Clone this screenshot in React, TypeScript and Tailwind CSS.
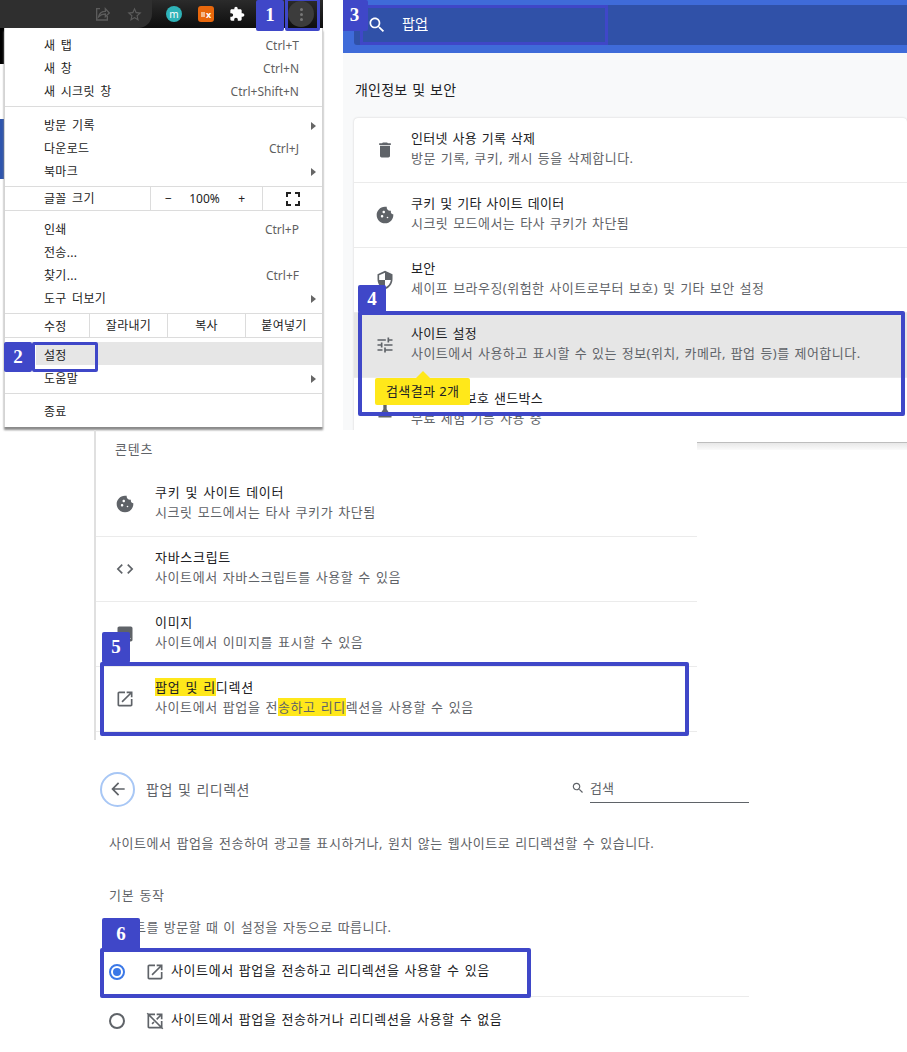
import type { ReactNode } from "react";

const ICONS = {
  trash: "M6 19c0 1.1.9 2 2 2h8c1.1 0 2-.9 2-2V7H6v12zM19 4h-3.5l-1-1h-5l-1 1H5v2h14V4z",
  cookie:
    "M21.95 10.99c-1.79-.03-3.7-1.95-2.68-4.22-2.98 1-5.77-1.59-5.19-4.56C6.95.71 2 6.58 2 12c0 5.52 4.48 10 10 10 5.89 0 10.54-5.08 9.95-11.01zM8.5 15C7.67 15 7 14.33 7 13.5S7.67 12 8.5 12s1.5.67 1.5 1.5S9.33 15 8.5 15zm2-5C9.67 10 9 9.33 9 8.5S9.67 7 10.5 7s1.5.67 1.5 1.5-.67 1.5-1.5 1.5zM15 16c-.55 0-1-.45-1-1s.45-1 1-1 1 .45 1 1-.45 1-1 1z",
  shield:
    "M12 1L3 5v6c0 5.55 3.84 10.74 9 12 5.16-1.26 9-6.45 9-12V5l-9-4zm0 10.99h7c-.53 4.12-3.28 7.79-7 8.94V12H5V6.3l7-3.11v8.8z",
  tune: "M3 17v2h6v-2H3zM3 5v2h10V5H3zm10 16v-2h8v-2h-8v-2h-2v6h2zM7 9v2H3v2h4v2h2V9H7zm14 4v-2H11v2h10zm-6-4h2V7h4V5h-4V3h-2v6z",
  flask: "M5 21c-.8 0-1.3-.9-.8-1.6L10 11V4h4v7l5.8 8.4c.5.7 0 1.6-.8 1.6H5z",
  code: "M9.4 16.6L4.8 12l4.6-4.6L8 6l-6 6 6 6 1.4-1.4zm5.2 0l4.6-4.6-4.6-4.6L16 6l6 6-6 6-1.4-1.4z",
  image:
    "M21 19V5c0-1.1-.9-2-2-2H5c-1.1 0-2 .9-2 2v14c0 1.1.9 2 2 2h14c1.1 0 2-.9 2-2zM8.5 13.5l2.5 3.01L14.5 12l4.5 6H5l3.5-4.5z",
  open: "M19 19H5V5h7V3H5c-1.11 0-2 .9-2 2v14c0 1.1.89 2 2 2h14c1.1 0 2-.9 2-2v-7h-2v7zM14 3v2h3.59l-9.83 9.83 1.41 1.41L19 6.41V10h2V3h-7z",
  blocked:
    "M19 19H5V5h7V3H5c-1.11 0-2 .9-2 2v14c0 1.1.89 2 2 2h14c1.1 0 2-.9 2-2v-7h-2v7zM14 3v2h3.59l-4.3 4.3 1.41 1.41L19 6.41V10h2V3h-7zM3.4 2L2 3.4l18.6 18.6 1.4-1.4L3.4 2zM7.76 14.83l1.41 1.41 2.3-2.3-1.41-1.41-2.3 2.3z",
  search:
    "M15.5 14h-.79l-.28-.27C15.41 12.59 16 11.11 16 9.5 16 5.91 13.09 3 9.5 3S3 5.91 3 9.5 5.91 16 9.5 16c1.61 0 3.09-.59 4.23-1.57l.27.28v.79l5 4.99L20.49 19l-4.99-5zm-6 0C7.01 14 5 11.99 5 9.5S7.01 5 9.5 5 14 7.01 14 9.5 11.99 14 9.5 14z",
  back: "M20 11H7.83l5.59-5.59L12 4l-8 8 8 8 1.41-1.41L7.83 13H20v-2z",
  puzzle:
    "M20.5 11H19V7c0-1.1-.9-2-2-2h-4V3.5C13 2.12 11.88 1 10.5 1S8 2.12 8 3.5V5H4c-1.1 0-1.99.9-1.99 2v3.8H3.5c1.49 0 2.7 1.21 2.7 2.7s-1.21 2.7-2.7 2.7H2V20c0 1.1.9 2 2 2h3.8v-1.5c0-1.49 1.21-2.7 2.7-2.7 1.49 0 2.7 1.21 2.7 2.7V22H17c1.1 0 2-.9 2-2v-4h1.5c1.38 0 2.5-1.12 2.5-2.5S21.88 11 20.5 11z",
  star: "M22 9.24l-7.19-.62L12 2 9.19 8.63 2 9.24l5.46 4.73L5.82 21 12 17.27 18.18 21l-1.63-7.03L22 9.24zM12 15.4l-3.76 2.27 1-4.28-3.32-2.88 4.38-.38L12 6.1l1.71 4.04 4.38.38-3.32 2.88 1 4.28L12 15.4z",
};

function Icon({ name, className }: { name: keyof typeof ICONS; className: string }) {
  return (
    <svg viewBox="0 0 24 24" className={className} fill="currentColor">
      <path d={ICONS[name]} />
    </svg>
  );
}

function Badge({ n, className }: { n: number; className: string }) {
  return (
    <div
      className={`absolute z-20 flex items-center justify-center rounded-[2px] bg-[#3f47c8] font-['Liberation_Serif',serif] text-[19px] font-bold text-white ${className}`}
    >
      {n}
    </div>
  );
}

function MenuRow({ label, hint, arrow }: { label: string; hint?: string; arrow?: boolean }) {
  return (
    <div className="flex h-[23px] items-center pl-[39px] pr-[6px]">
      <span className="tracking-[0.3px] [word-spacing:2px]">{label}</span>
      {hint && <span className="ml-auto pr-[17px] text-[#5f5f5f]">{hint}</span>}
      {arrow && (
        <span className="ml-auto h-0 w-0 border-y-[4px] border-l-[5px] border-y-transparent border-l-[#666]" />
      )}
    </div>
  );
}

function MenuLine() {
  return <div className="h-px bg-[#dcdcdc]" />;
}

function Browser() {
  return (
    <div className="relative w-[343px]">
      <div className="flex h-[28px] w-[323px] items-center bg-gradient-to-b from-[#2b2b2b] to-[#0e0e0e]">
        <div className="flex h-[28px] w-[152px] items-center justify-end gap-[16px] rounded-br-[14px] bg-[#2f2f2f] pr-[9px] text-[#5c5c5c]">
          <svg viewBox="0 0 24 24" className="h-[16px] w-[16px]" fill="none" stroke="currentColor" strokeWidth="2">
            <path d="M9 4H4v17h16v-6M7 16c1-5 5-8 10-8V4l6 6.5L17 16v-4c-4 0-7 1-10 4z" />
          </svg>
          <Icon name="star" className="h-[17px] w-[17px]" />
        </div>
        <div className="ml-[14px] flex h-[16px] w-[16px] items-center justify-center rounded-full bg-[#2fb3b8] text-[10px] leading-none text-white">
          m
        </div>
        <div className="ml-[16px] flex h-[16px] w-[16px] items-center justify-center gap-[1px] rounded-[3px] bg-[#e8670c] text-[9px] font-bold leading-none text-white">
          <span className="h-[5px] w-[4px] bg-[#f4b98c]" />x
        </div>
        <Icon name="puzzle" className="ml-[15px] h-[16px] w-[16px] text-white" />
        <div className="ml-[43px] flex h-[26px] w-[26px] flex-col items-center justify-center gap-[2px] rounded-full bg-[#3c3c3c]">
          <span className="h-[3px] w-[3px] rounded-full bg-[#777]" />
          <span className="h-[3px] w-[3px] rounded-full bg-[#777]" />
          <span className="h-[3px] w-[3px] rounded-full bg-[#777]" />
        </div>
      </div>
      <Badge n={1} className="left-[256px] top-0 h-[31px] w-[28px]" />
      <div className="absolute left-[285px] top-0 z-10 h-[31px] w-[35px] rounded-b-[2px] border-[3px] border-t-[1px] border-[#3f47c8]" />

      <div className="flex">
        <div className="flex w-[4px] flex-col">
          <div className="h-[36px] w-[4px] bg-black" />
          <div className="mt-[55px] h-[60px] w-[4px] bg-[#2f55ad]" />
        </div>
        <div className="h-[399px] w-[319px] border-x border-x-[#d4d4d4] bg-white text-[12px] text-[#222] shadow-[0_3px_2px_#8a8a8a]">
          <div className="pt-[6px]">
            <MenuRow label="새 탭" hint="Ctrl+T" />
            <MenuRow label="새 창" hint="Ctrl+N" />
            <MenuRow label="새 시크릿 창" hint="Ctrl+Shift+N" />
          </div>
          <div className="mt-[3px]">
            <MenuLine />
          </div>
          <div className="pt-[7px]">
            <MenuRow label="방문 기록" arrow />
            <MenuRow label="다운로드" hint="Ctrl+J" />
            <MenuRow label="북마크" arrow />
          </div>
          <div className="mt-[3px]">
            <MenuLine />
          </div>
          <div className="flex h-[23px] items-center">
            <div className="w-[145px] pl-[39px] tracking-[0.3px] [word-spacing:2px]">글꼴 크기</div>
            <div className="flex h-full w-[113px] items-center border-x border-x-[#dcdcdc]">
              <span className="w-[36px] pl-[14px]">−</span>
              <span className="w-[36px] text-center">100%</span>
              <span className="w-[40px] pl-[16px]">+</span>
            </div>
            <div className="flex flex-1 items-center justify-center">
              <svg viewBox="0 0 14 14" className="h-[14px] w-[14px]" fill="none" stroke="#222" strokeWidth="2">
                <path d="M1 5V1h4M9 1h4v4M13 9v4H9M5 13H1V9" />
              </svg>
            </div>
          </div>
          <MenuLine />
          <div className="pt-[7px]">
            <MenuRow label="인쇄" hint="Ctrl+P" />
            <MenuRow label="전송..." />
            <MenuRow label="찾기..." hint="Ctrl+F" />
            <MenuRow label="도구 더보기" arrow />
          </div>
          <div className="mt-[3px]">
            <MenuLine />
          </div>
          <div className="flex h-[23px] items-center text-center tracking-[0.3px]">
            <div className="w-[84px] pl-[39px] pt-[2px] text-left">수정</div>
            <div className="flex h-full w-[78px] items-center justify-center border-l border-l-[#dcdcdc]">잘라내기</div>
            <div className="flex h-full w-[78px] items-center justify-center border-l border-l-[#dcdcdc]">복사</div>
            <div className="flex h-full flex-1 items-center justify-center border-l border-l-[#dcdcdc]">붙여넣기</div>
          </div>
          <MenuLine />
          <div className="mt-[4px] h-[23px] bg-[#e6e6e6] pt-[2px]">
            <MenuRow label="설정" />
          </div>
          <div className="mt-[2px]">
            <MenuRow label="도움말" arrow />
          </div>
          <div className="mt-[3px]">
            <MenuLine />
          </div>
          <div className="pt-[6px]">
            <MenuRow label="종료" />
          </div>
        </div>
      </div>
      <Badge n={2} className="left-[4px] top-[342px] h-[30px] w-[28px]" />
      <div className="absolute left-[32px] top-[342px] z-10 h-[30px] w-[66px] rounded-[2px] border-[3px] border-[#3f47c8] shadow-[inset_1px_-1px_0_#fff]" />
    </div>
  );
}

function Mark({ children }: { children: ReactNode }) {
  return <span className="bg-[#ffe81a]">{children}</span>;
}

function SettingRow({
  icon,
  title,
  sub,
  active,
  wide,
}: {
  icon: keyof typeof ICONS;
  title: ReactNode;
  sub: ReactNode;
  active?: boolean;
  wide?: boolean;
}) {
  return (
    <div
      className={`flex h-[65px] items-center border-b border-b-[#ebebeb] ${wide ? "pl-[19px]" : "pl-[21px]"} ${
        active ? "bg-[#e6e6e6]" : ""
      }`}
    >
      <Icon name={icon} className="h-[20px] w-[20px] shrink-0 text-[#5f6368]" />
      <div
        className={`flex flex-col gap-[4px] pb-[5px] text-[13px] leading-[16px] [word-spacing:1px] ${
          wide ? "ml-[20px]" : "ml-[16px]"
        }`}
      >
        <div className={`text-[#202124] ${wide ? "tracking-[0.7px]" : "tracking-[0.3px]"}`}>{title}</div>
        <div className={`text-[#5f6368] ${wide ? "tracking-[0.6px]" : "tracking-[0.47px]"}`}>{sub}</div>
      </div>
    </div>
  );
}

function SettingsSearch() {
  return (
    <div className="relative min-w-0 flex-1 overflow-hidden bg-[#f8f9fa]">
      <div className="h-[53px] bg-[#3f6bd9] pl-[11px] pt-[5px]">
        <div className="flex h-[40px] items-center rounded-l-[3px] bg-[#3051a8] pl-[13px] text-white">
          <Icon name="search" className="h-[20px] w-[20px]" />
          <span className="mb-[3px] ml-[15px] text-[14px]">
            팝<span className="underline">업</span>
          </span>
        </div>
      </div>
      <div className="absolute left-[17px] top-[5px] z-10 h-[40px] w-[248px] border-[3px] border-[#3f47c8]" />
      <Badge n={3} className="left-[-2px] top-0 h-[31px] w-[27px]" />

      <div className="pl-[12px] pt-[27px] text-[14px] leading-[20px] tracking-[0.2px] text-[#202124] [word-spacing:1px]">
        개인정보 및 보안
      </div>
      <div className="ml-[11px] mt-[18px] rounded-t-[4px] bg-white shadow-[0_0_2px_#c8c8c8]">
        <SettingRow icon="trash" title="인터넷 사용 기록 삭제" sub="방문 기록, 쿠키, 캐시 등을 삭제합니다." />
        <SettingRow icon="cookie" title="쿠키 및 기타 사이트 데이터" sub="시크릿 모드에서는 타사 쿠키가 차단됨" />
        <SettingRow icon="shield" title="보안" sub="세이프 브라우징(위험한 사이트로부터 보호) 및 기타 보안 설정" />
        <SettingRow
          icon="tune"
          active
          title="사이트 설정"
          sub="사이트에서 사용하고 표시할 수 있는 정보(위치, 카메라, 팝업 등)를 제어합니다."
        />
        <SettingRow icon="flask" title="개인정보 보호 샌드박스" sub="무료 체험 기능 사용 중" />
      </div>

      <Badge n={4} className="left-[15px] top-[285px] h-[28px] w-[28px]" />
      <div className="absolute left-[15px] top-[311px] z-10 h-[105px] w-[547px] rounded-[2px] border-[4px] border-[#3f47c8]" />
      <div className="absolute left-[32px] top-[378px] z-10 rounded-[2px] bg-[#ffe81a] px-[11px] py-[4px] text-[13px] leading-[19px] tracking-[0.4px] text-[#202124]">
        <span className="absolute left-[41px] top-[-7px] h-0 w-0 border-x-[7px] border-b-[7px] border-x-transparent border-b-[#ffe81a]" />
        검색결과 2개
      </div>
    </div>
  );
}

function SiteSettings() {
  return (
    <div className="flex h-[310px]">
      <div className="relative ml-[94px] w-[603px] border-l-2 border-l-[#e0e0e0]">
        <div className="flex h-[42px] items-end pb-[15px] pl-[19px] text-[13px] leading-[16px] tracking-[0.8px] text-[#5f6368]">
          콘텐츠
        </div>
        <SettingRow wide icon="cookie" title="쿠키 및 사이트 데이터" sub="시크릿 모드에서는 타사 쿠키가 차단됨" />
        <SettingRow wide icon="code" title="자바스크립트" sub="사이트에서 자바스크립트를 사용할 수 있음" />
        <SettingRow wide icon="image" title="이미지" sub="사이트에서 이미지를 표시할 수 있음" />
        <SettingRow
          wide
          icon="open"
          title={
            <>
              <Mark>팝업 및 리</Mark>디렉션
            </>
          }
          sub={
            <>
              사이트에서 팝업을 전<Mark>송하고 리디</Mark>렉션을 사용할 수 있음
            </>
          }
        />
        <Badge n={5} className="left-[6px] top-[202px] h-[31px] w-[28px]" />
        <div className="absolute left-[4px] top-[232px] z-10 h-[74px] w-[589px] rounded-[2px] border-[4px] border-[#3f47c8]" />
      </div>
      <div className="mt-[12px] h-[8px] flex-1 border-t border-t-[#bdbdbd] bg-gradient-to-b from-[#e8e8e8] to-[#fafafa]" />
    </div>
  );
}

function RadioRow({ checked, icon, label }: { checked?: boolean; icon: keyof typeof ICONS; label: string }) {
  return (
    <div className="flex h-[48px] items-center">
      <div
        className={`flex h-[16px] w-[16px] items-center justify-center rounded-full border-2 ${
          checked ? "border-[#3b78e7]" : "border-[#5f6368]"
        }`}
      >
        {checked && <div className="h-[8px] w-[8px] rounded-full bg-[#3b78e7]" />}
      </div>
      <Icon name={icon} className="ml-[20px] h-[20px] w-[20px] text-[#5f6368]" />
      <span className="mb-[3px] ml-[6px] text-[13px] tracking-[0.6px] text-[#202124] [word-spacing:1px]">{label}</span>
    </div>
  );
}

function PopupPage() {
  return (
    <div className="relative pl-[100px] pt-[31px]">
      <div className="flex h-[36px] w-[649px] items-center">
        <div className="flex h-[35px] w-[35px] items-center justify-center rounded-full border-2 border-[#a8c7f5]">
          <Icon name="back" className="h-[20px] w-[20px] text-[#5f6368]" />
        </div>
        <span className="ml-[11px] text-[14px] tracking-[0.5px] text-[#5f6368] [word-spacing:1px]">팝업 및 리디렉션</span>
        <div className="ml-auto flex h-[26px] w-[178px] items-start">
          <Icon name="search" className="mt-[5px] h-[14px] w-[14px] text-[#5f6368]" />
          <span className="ml-[5px] h-[27px] flex-1 border-b border-b-[#5f6368] pt-[4px] text-[13px] leading-[16px] text-[#5f6368]">
            검색
          </span>
        </div>
      </div>
      <div className="pl-[9px]">
        <p className="mt-[26px] text-[13px] leading-[20px] tracking-[0.55px] text-[#5f6368] [word-spacing:1px]">
          사이트에서 팝업을 전송하여 광고를 표시하거나, 원치 않는 웹사이트로 리디렉션할 수 있습니다.
        </p>
        <p className="mt-[32px] text-[13px] leading-[20px] tracking-[0.7px] text-[#5f6368] [word-spacing:1px]">기본 동작</p>
        <p className="mt-[12px] text-[13px] leading-[20px] tracking-[0.5px] text-[#5f6368] [word-spacing:1px]">
          사이트를 방문할 때 이 설정을 자동으로 따릅니다.
        </p>
        <div className="mt-[11px] w-[640px]">
          <div className="border-b border-b-[#ebebeb]">
            <RadioRow checked icon="open" label="사이트에서 팝업을 전송하고 리디렉션을 사용할 수 있음" />
          </div>
          <RadioRow icon="blocked" label="사이트에서 팝업을 전송하거나 리디렉션을 사용할 수 없음" />
        </div>
      </div>
      <Badge n={6} className="left-[102px] top-[178px] h-[33px] w-[38px]" />
      <div className="absolute left-[100px] top-[208px] z-10 h-[50px] w-[431px] rounded-[2px] border-[4px] border-[#3f47c8]" />
    </div>
  );
}

export default function App() {
  return (
    <div className="h-[1052px] w-[907px] overflow-hidden bg-white font-['Noto_Sans','Noto_Sans_CJK_KR',sans-serif]">
      <div className="flex h-[430px]">
        <Browser />
        <SettingsSearch />
      </div>
      <SiteSettings />
      <PopupPage />
    </div>
  );
}
